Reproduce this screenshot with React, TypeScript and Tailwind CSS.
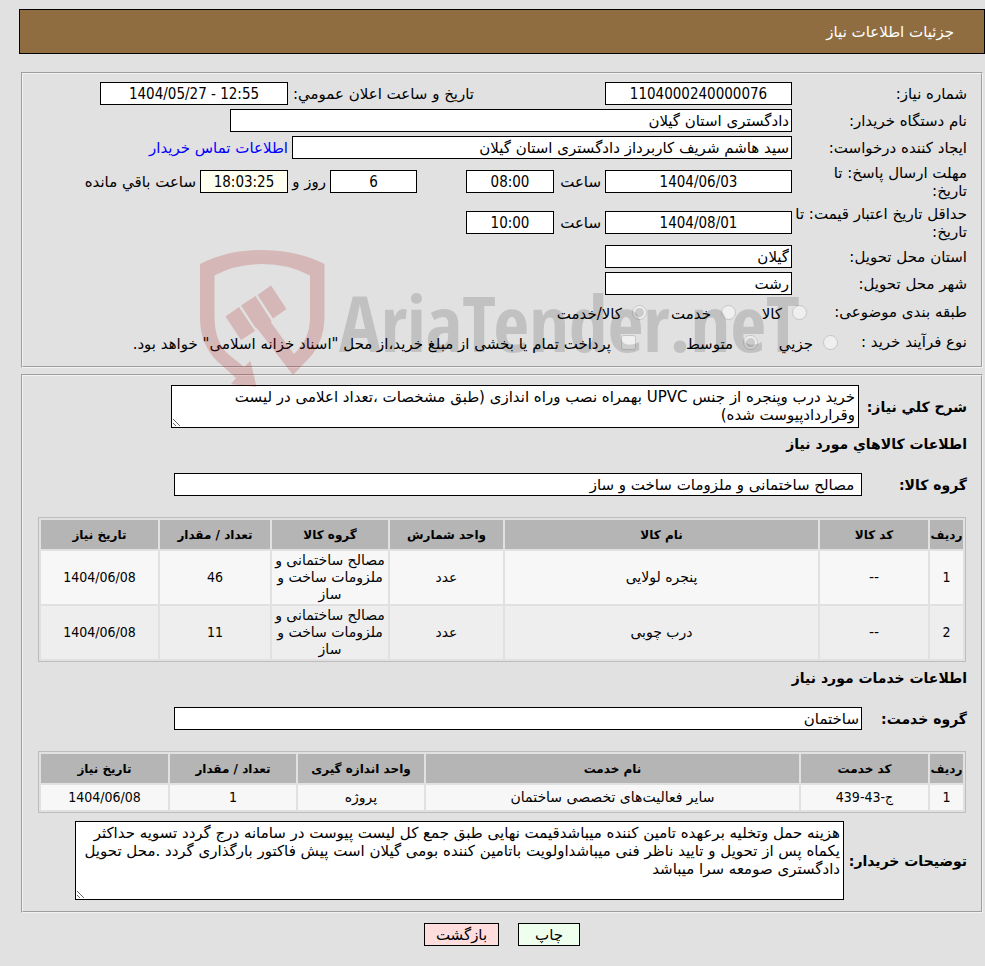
import type { ReactNode } from 'react'

const goodsColumns = [
  { title: 'ردیف', width: 'w-[33px]' },
  { title: 'کد کالا', width: 'w-[108px]' },
  { title: 'نام کالا', width: '' },
  { title: 'واحد شمارش', width: 'w-[113px]' },
  { title: 'گروه کالا', width: 'w-[116px]' },
  { title: 'تعداد / مقدار', width: 'w-[110px]' },
  { title: 'تاریخ نیاز', width: 'w-[117px]' },
]

const goodsRows = [
  ['1', '--', 'پنجره لولایی', 'عدد', 'مصالح ساختمانی و ملزومات ساخت و ساز', '46', '1404/06/08'],
  ['2', '--', 'درب چوبی', 'عدد', 'مصالح ساختمانی و ملزومات ساخت و ساز', '11', '1404/06/08'],
]

const serviceColumns = [
  { title: 'ردیف', width: 'w-[33px]' },
  { title: 'کد خدمت', width: 'w-[127px]' },
  { title: 'نام خدمت', width: '' },
  { title: 'واحد اندازه گیری', width: 'w-[126px]' },
  { title: 'تعداد / مقدار', width: 'w-[126px]' },
  { title: 'تاریخ نیاز', width: 'w-[127px]' },
]

const serviceRows = [
  ['1', 'ج-43-439', 'سایر فعالیت‌های تخصصی ساختمان', 'پروژه', '1', '1404/06/08'],
]

const digitFont = "font-['DejaVu_Sans_Condensed','DejaVu_Sans',sans-serif]"

function TextField({ id, value, className = '' }: { id: string; value: string; className?: string }) {
  return (
    <input
      id={id}
      readOnly
      defaultValue={value}
      className={`h-[23px] border border-black bg-white px-[2px] ${className}`}
    />
  )
}

function NumberField({ id, value, className = '' }: { id: string; value: string; className?: string }) {
  return (
    <input
      id={id}
      dir="ltr"
      readOnly
      defaultValue={value}
      className={`h-[23px] border border-black px-[2px] text-center ${digitFont} ${className}`}
    />
  )
}

function Row({ id, label, tall, children }: { id: string; label: string; tall?: boolean; children: ReactNode }) {
  return (
    <div className={`flex items-center ${tall ? 'h-[41px]' : 'h-[27px]'}`}>
      <label htmlFor={id} className="w-[175px] shrink-0 whitespace-pre leading-[18px]">
        {label}
      </label>
      {children}
    </div>
  )
}

function Option({ id, name, label, type = 'radio', checked, className = '' }: {
  id: string
  name: string
  label: string
  type?: string
  checked?: boolean
  className?: string
}) {
  return (
    <span className={`flex shrink-0 items-center gap-2.5 ${className}`}>
      <input id={id} type={type} name={name} defaultChecked={checked} disabled className="size-[15px] shrink-0" />
      <label htmlFor={id} className="whitespace-nowrap pt-1">
        {label}
      </label>
    </span>
  )
}

function DataTable({ columns, rows }: { columns: { title: string; width: string }[]; rows: string[][] }) {
  return (
    <table className="w-full table-fixed border-separate border-spacing-[2px] border border-[#bdbdbd] text-center text-sm leading-[17px]">
      <thead>
        <tr className="h-[29px] bg-[#b5b5b5] text-xs">
          {columns.map((col) => (
            <th key={col.title} className={`whitespace-nowrap font-bold ${col.width}`}>
              {col.title}
            </th>
          ))}
        </tr>
      </thead>
      <tbody>
        {rows.map((row, i) => (
          <tr key={i} className="h-[25px] bg-[#f7f7f7] even:bg-[#eeeeee]">
            {row.map((cell, j) => (
              <td key={j} className={`px-[2px] py-[1px] ${/\d/.test(cell) ? digitFont : ''}`}>
                {cell}
              </td>
            ))}
          </tr>
        ))}
      </tbody>
    </table>
  )
}

function Watermark() {
  return (
    <svg
      viewBox="0 0 610 145"
      className="pointer-events-none absolute right-[178px] top-[172px] h-[145px] w-[610px]"
      aria-hidden="true"
      direction="ltr"
    >
      <g fill="#aa1414" opacity="0.2">
        <path
          fillRule="evenodd"
          d="M7 18 Q34 4 69 4 Q104 4 131.500 18 V72 Q131 94 119 109 L100 129 L64.500 83 L62 81 L48 59.500 L62.500 50 L78.500 75 L78 76.500 L101 108 Q117 93 117 72 V29.500 Q96 18 69 18 Q42 18 21.500 29.500 V72 Q22 96 35 108 L51 121 L57.500 115 L63.500 141 L38 138 L43 132 L24 115 Q7 98 7 72 Z"
        />
        <path d="M32.500 70.500 L46 61 L62 85 L48 94 Z" />
        <path d="M64.500 49 L78 39.500 L93.500 63 L80 72.500 Z" />
      </g>
      <text
        x="146"
        y="106"
        fill="#000000"
        fillOpacity="0.14"
        className="font-['Open_Sans_Condensed','Roboto_Condensed',sans-serif] text-[78px] font-bold"
      >
        AriaTender.neT
      </text>
    </svg>
  )
}

export default function App() {
  return (
    <div
      dir="rtl"
      lang="fa"
      className="min-h-screen bg-[#e1e1e1] pb-4 pt-[9px] font-['DejaVu_Sans',sans-serif] text-[15px] leading-[18px] text-black"
    >
      <header className="ml-[19px] flex h-[45px] items-center border border-black bg-[#8f6d40] px-[30px] text-white">
        <h1>جزئیات اطلاعات نیاز</h1>
      </header>

      <main className="ml-[21px] mr-[2px] mt-[18px]">
        {/* General information */}
        <section className="relative h-[296px] border-2 border-[#f2f2f2] px-[14px] pt-[6px] [border-style:groove]">
          <Row id="need-number" label="شماره نیاز:">
            <NumberField id="need-number" value="1104000240000076" className="w-[187px] bg-white" />
            <label htmlFor="announced" className="w-[317px] pl-[5px] text-left">
              تاریخ و ساعت اعلان عمومي:
            </label>
            <NumberField id="announced" value="1404/05/27 - 12:55" className="w-[188px] bg-white" />
          </Row>
          <Row id="buyer" label="نام دستگاه خریدار:">
            <TextField id="buyer" value="دادگستری استان گیلان" className="w-[562px]" />
          </Row>
          <Row id="creator" label="ایجاد کننده درخواست:">
            <TextField id="creator" value="سید هاشم شریف کاربرداز دادگستری استان گیلان" className="w-[500px]" />
            <a href="#contact" className="mr-1 text-[#0000ff]">
              اطلاعات تماس خریدار
            </a>
          </Row>
          <Row id="deadline-date" label={'مهلت ارسال پاسخ: تا\nتاریخ:'} tall>
            <NumberField id="deadline-date" value="1404/06/03" className="w-[187px] bg-white" />
            <label htmlFor="deadline-time" className="w-[51px] pr-1">ساعت</label>
            <NumberField id="deadline-time" value="08:00" className="w-[88px] bg-white" />
            <NumberField id="days-left" value="6" className="mr-[49px] w-[87px] bg-white" />
            <label htmlFor="days-left" className="w-[42px] pr-1">روز و</label>
            <NumberField id="time-left" value="18:03:25" className="w-[88px] bg-[#fffff0]" />
            <label htmlFor="time-left" className="pr-1">ساعت باقي مانده</label>
          </Row>
          <Row id="valid-date" label={'حداقل تاریخ اعتبار قیمت: تا\nتاریخ:'} tall>
            <NumberField id="valid-date" value="1404/08/01" className="w-[187px] bg-white" />
            <label htmlFor="valid-time" className="w-[51px] pr-1">ساعت</label>
            <NumberField id="valid-time" value="10:00" className="w-[88px] bg-white" />
          </Row>
          <Row id="province" label="استان محل تحویل:">
            <TextField id="province" value="گیلان" className="w-[187px]" />
          </Row>
          <Row id="city" label="شهر محل تحویل:">
            <TextField id="city" value="رشت" className="w-[187px]" />
          </Row>

          <div className="flex h-[30px] items-center">
            <span className="w-[160px] shrink-0">طبقه بندی موضوعی:</span>
            <Option id="kind-goods" name="kind" label="کالا" className="w-[71px]" />
            <Option id="kind-service" name="kind" label="خدمت" className="w-[89px]" />
            <Option id="kind-both" name="kind" label="کالا/خدمت" checked />
          </div>
          <div className="flex h-[30px] items-center">
            <span className="w-[129px] shrink-0">نوع فرآیند خرید :</span>
            <Option id="size-small" name="size" label="جزیي" className="w-[80px]" />
            <Option id="size-medium" name="size" label="متوسط" checked className="w-[122px]" />
            <Option
              id="treasury"
              name="treasury"
              type="checkbox"
              label={'پرداخت تمام یا بخشی از مبلغ خرید،از محل "اسناد خزانه اسلامی" خواهد بود.'}
            />
          </div>
          <Watermark />
        </section>

        {/* Goods and services */}
        <section className="mt-[6px] border-2 border-[#f2f2f2] px-[14px] pb-[11px] pt-[9px] [border-style:groove]">
          <div className="flex items-center">
            <label htmlFor="summary" className="w-[108px] shrink-0 text-sm font-bold">شرح کلي نیاز:</label>
            <textarea
              id="summary"
              readOnly
              className="h-[43px] w-[688px] border border-black bg-white px-[3px] py-[2px]"
              defaultValue="خرید درب وپنجره از جنس UPVC بهمراه نصب وراه اندازی (طبق مشخصات ،تعداد اعلامی در لیست وقراردادپیوست شده)"
            />
          </div>
          <h2 className="mt-[6px] text-sm font-bold">اطلاعات کالاهاي مورد نیاز</h2>
          <div className="mt-[19px] flex items-center">
            <label htmlFor="goods-group" className="w-[105px] shrink-0 text-sm font-bold">گروه کالا:</label>
            <TextField id="goods-group" value=" مصالح ساختمانی و ملزومات ساخت و ساز" className="w-[688px]" />
          </div>
          <div className="mx-[1px] mt-[21px]">
            <DataTable columns={goodsColumns} rows={goodsRows} />
          </div>

          <h2 className="mt-[6px] text-sm font-bold">اطلاعات خدمات مورد نیاز</h2>
          <div className="mt-[19px] flex items-center">
            <label htmlFor="service-group" className="w-[105px] shrink-0 text-sm font-bold">گروه خدمت:</label>
            <TextField id="service-group" value="ساختمان" className="w-[688px]" />
          </div>
          <div className="mx-[1px] mt-[21px]">
            <DataTable columns={serviceColumns} rows={serviceRows} />
          </div>

          <div className="mt-2 flex items-center">
            <label htmlFor="notes" className="w-[123px] shrink-0 text-sm font-bold">توضیحات خریدار:</label>
            <textarea
              id="notes"
              readOnly
              className="h-[79px] w-[769px] border border-black bg-white px-[3px] py-[2px]"
              defaultValue="هزینه حمل وتخلیه برعهده تامین کننده میباشدقیمت نهایی طبق جمع کل لیست پیوست در سامانه درج گردد تسویه حداکثر یکماه پس از تحویل و تایید ناظر فنی میباشداولویت باتامین کننده بومی گیلان است پیش فاکتور بارگذاری گردد .محل تحویل دادگستری صومعه سرا میباشد"
            />
          </div>
        </section>

        <div className="mt-[10px] flex justify-center gap-[19px]">
          <button type="button" className="h-[23px] w-[62px] border border-black bg-[#eeffee]">چاپ</button>
          <button type="button" className="h-[23px] w-[75px] border border-black bg-[#ffdddd]">بازگشت</button>
        </div>
      </main>
    </div>
  )
}
